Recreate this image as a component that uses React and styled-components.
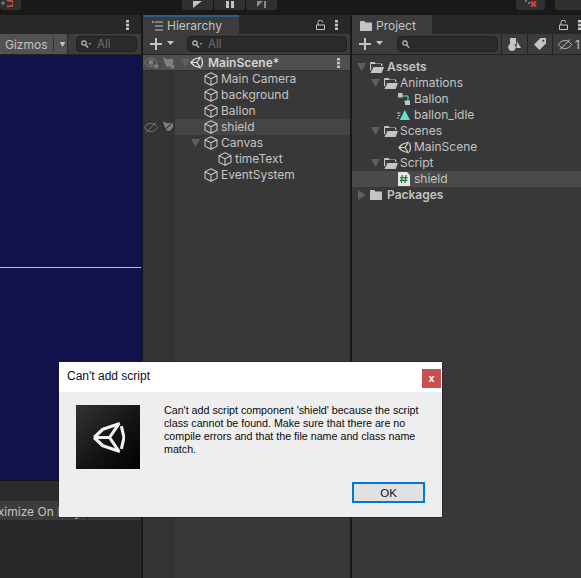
import React from "react";
import styled, { createGlobalStyle } from "styled-components";

const Global = createGlobalStyle`
  html, body { margin: 0; padding: 0; background: #191919; }
  * { box-sizing: border-box; }
`;

const Page = styled.div`
  position: relative;
  width: 581px;
  height: 578px;
  overflow: hidden;
  background: #191919;
  display: flex;
  flex-direction: column;
  font-family: Inter, "Liberation Sans", sans-serif;
  font-size: 12px;
  color: #c4c4c4;
`;

/* top play bar */
const TopBar = styled.div`
  height: 15px;
  flex: none;
  position: relative;
  overflow: hidden;
  display: flex;
  background: #191919;
`;
const TopGroup = styled.div`
  display: flex;
  gap: 1px;
  height: 10px;
  margin-left: ${(p) => p.$ml}px;
  flex: none;
`;
const TopButton = styled.div`
  width: ${(p) => p.$w}px;
  height: 10px;
  flex: none;
  background: #303030;
  border-radius: 0 0 3px 3px;
  display: flex;
  align-items: flex-end;
  justify-content: ${(p) => (p.$end ? "flex-end" : "center")};
  padding: 0 ${(p) => (p.$end ? 8 : 0)}px 2px 0;
  overflow: hidden;
`;

/* panels */
const Panels = styled.div`
  flex: 1;
  display: flex;
  gap: 2px;
  min-height: 0;
  background: #191919;
`;
const Panel = styled.section`
  width: ${(p) => p.$w}px;
  flex: ${(p) => (p.$w ? "none" : "1")};
  display: flex;
  flex-direction: column;
  background: #383838;
  min-width: 0;
  overflow: hidden;
`;
const TabBar = styled.div`
  height: 19px;
  flex: none;
  display: flex;
  align-items: stretch;
  background: #282828;
  position: relative;
`;
const Tab = styled.div`
  width: ${(p) => p.$w}px;
  background: #3c3c3c;
  border-top: 2px solid ${(p) => (p.$focus ? "#2c5d87" : "#3c3c3c")};
  display: flex;
  align-items: center;
  gap: 4px;
  padding-left: ${(p) => p.$pl}px;
  font-size: 12px;
  color: #c4c4c4;
  line-height: 1;
`;
const TabActions = styled.div`
  margin-left: auto;
  display: flex;
  align-items: center;
  gap: ${(p) => p.$gap || 10}px;
  padding-right: ${(p) => p.$pr ?? 6}px;
`;
const Toolbar = styled.div`
  height: 21px;
  flex: none;
  display: flex;
  align-items: center;
  background: #3c3c3c;
  border-bottom: 1px solid #232323;
  padding-left: ${(p) => p.$pl || 0}px;
`;
const Search = styled.div`
  height: 16px;
  width: ${(p) => p.$w}px;
  flex: ${(p) => (p.$w ? "none" : "1")};
  margin-left: ${(p) => p.$ml}px;
  margin-right: ${(p) => p.$mr || 0}px;
  background: #2a2a2a;
  border: 1px solid #202020;
  border-radius: 4px;
  display: flex;
  align-items: center;
  padding-left: 4px;
  gap: 5px;
  color: #6e6e6e;
  font-size: 11.5px;
`;
const ToolSeparated = styled.div`
  height: 20px;
  width: ${(p) => p.$w}px;
  flex: none;
  display: flex;
  align-items: center;
  justify-content: ${(p) => (p.$left ? "flex-start" : "center")};
  padding-left: ${(p) => (p.$left ? 5 : 0)}px;
  gap: 3px;
  border-left: 1px solid #232323;
  overflow: hidden;
  white-space: nowrap;
  color: #c4c4c4;
`;

/* game view */
const GameBody = styled.div`
  flex: 1;
  display: flex;
  flex-direction: column;
  background: #282828;
`;
const Gizmos = styled.div`
  width: 68px;
  height: 20px;
  flex: none;
  background: #525252;
  display: flex;
  align-items: center;
  padding-left: 5px;
  font-size: 12px;
  color: #c4c4c4;
  border-right: 1px solid #2a2a2a;
`;
const GizmoDivider = styled.span`
  width: 1px;
  height: 14px;
  background: #303030;
  margin: 0 5px 0 5px;
`;
const Viewport = styled.div`
  height: 426px;
  flex: none;
  background: #11114c;
  border-bottom: 1px solid #151515;
  display: flex;
  flex-direction: column;
  padding-top: 212px;
`;
const HorizonLine = styled.div`
  height: 1px;
  background: #bcbcd4;
`;
const GameSpacer = styled.div`
  height: 20px;
  flex: none;
  background: #2b2b2b;
`;
const GameStatus = styled.div`
  height: 20px;
  flex: none;
  background: #3c3c3c;
  border-bottom: 1px solid #232323;
  overflow: hidden;
  white-space: nowrap;
  display: flex;
  align-items: center;
  justify-content: flex-start;
`;
const StatusLabel = styled.div`
  width: 88px;
  flex: none;
  display: flex;
  justify-content: flex-end;
  padding: 1px 6px 0 0;
  border-right: 1px solid #262626;
  height: 20px;
  align-items: center;
  color: #c4c4c4;
`;

/* tree */
const Tree = styled.div`
  flex: 1;
  display: flex;
  flex-direction: column;
  background: #383838;
`;
const HierTree = styled(Tree)`
  background: linear-gradient(90deg, #333333 32px, #383838 32px);
`;
const HierRow = styled.div`
  height: 16px;
  display: flex;
  align-items: stretch;
  flex: none;
  background: ${(p) => (p.$scene ? "#4f4f4f" : "transparent")};
  border-bottom: ${(p) => (p.$scene ? "1px solid #303030" : "none")};
  font-weight: ${(p) => (p.$scene ? 600 : 400)};
`;
const HierGutter = styled.div`
  width: 32px;
  flex: none;
  display: flex;
  align-items: center;
  gap: 4px;
  padding-left: 1px;
`;
const HierMain = styled.div`
  flex: 1;
  display: flex;
  align-items: center;
  padding-left: ${(p) => p.$indent}px;
  background: ${(p) => (p.$hover ? "#454545" : "transparent")};
  min-width: 0;
`;
const RowMenu = styled.div`
  margin-left: auto;
  padding-right: 10px;
  display: flex;
  align-items: center;
`;
const ArrowSlot = styled.span`
  width: ${(p) => p.$w}px;
  flex: none;
  display: flex;
  align-items: center;
`;
const Label = styled.span`
  margin-left: ${(p) => p.$ml ?? 3}px;
  line-height: 16px;
  white-space: nowrap;
  color: ${(p) => p.$color || "#c4c4c4"};
`;
const ProjectTree = styled(Tree)`
  padding-top: 4px;
`;
const ProjectRow = styled.div`
  height: 16px;
  flex: none;
  display: flex;
  align-items: center;
  padding-left: ${(p) => p.$indent}px;
  background: ${(p) => (p.$hover ? "#4a4a4a" : "transparent")};
  font-weight: ${(p) => (p.$bold ? 600 : 400)};
`;

/* dialog */
const Dialog = styled.div`
  position: absolute;
  left: 59px;
  top: 362px;
  width: 383px;
  height: 155px;
  background: #eeeeee;
  display: flex;
  flex-direction: column;
  font-family: "Liberation Sans", Arial, sans-serif;
  color: #000;
  box-shadow: 0 0 0 1px rgba(30, 30, 30, 0.5);
`;
const DialogTitle = styled.div`
  height: 30px;
  flex: none;
  background: #fff;
  display: flex;
  align-items: flex-start;
  justify-content: space-between;
  padding: 7px 1px 0 8px;
  font-size: 12px;
  line-height: 15px;
  color: #111;
`;
const CloseBox = styled.div`
  width: 19px;
  height: 19px;
  background: #c75050;
  color: #fff;
  display: flex;
  align-items: center;
  justify-content: center;
  font-weight: 700;
  font-size: 10px;
`;
const DialogBody = styled.div`
  flex: 1;
  display: flex;
  padding: 12px 17px 0 17px;
  gap: 24px;
`;
const LogoBox = styled.div`
  width: 64px;
  height: 64px;
  margin-top: 1px;
  flex: none;
  background: linear-gradient(135deg, #333333 0%, #141414 55%, #000000 100%);
  display: flex;
  align-items: center;
  justify-content: center;
`;
const Message = styled.p`
  margin: 0;
  width: 258px;
  font-size: 10.7px;
  line-height: 13px;
  color: #0a0a0a;
`;
const DialogFooter = styled.div`
  height: 35px;
  flex: none;
  display: flex;
  justify-content: flex-end;
  padding: 0 17px 0 0;
`;
const OkButton = styled.div`
  width: 73px;
  height: 21px;
  background: #e1e1e1;
  border: 2px solid #0078d7;
  display: flex;
  align-items: center;
  justify-content: center;
  font-size: 11.5px;
  color: #111;
`;

/* icons */
const Svg = ({ s = 14, w, h, vb, children, style }) => (
  <svg width={w || s} height={h || s} viewBox={vb || `0 0 ${s} ${s}`} style={{ flex: "none", display: "block", ...style }}>
    {children}
  </svg>
);
const Cube = () => (
  <Svg s={14}>
    <path d="M7 .7 13 3.700v6.600L7 13.300 1 10.300V3.700Z M1 3.700 7 6.700 13 3.700 M7 6.700v6.600" fill="none" stroke="#c4c4c4" strokeWidth="1.100" strokeLinejoin="round" />
  </Svg>
);
const Down = ({ c = "#5f5f5f", w = 9, h = 8 }) => (
  <Svg w={w} h={h} vb="0 0 9 8"><path d="M0 0h9L4.5 8Z" fill={c} /></Svg>
);
const Right = () => (
  <Svg w={8} h={10} vb="0 0 8 10"><path d="M0 0v10l8-5Z" fill="#5f5f5f" /></Svg>
);
const Dots = () => (
  <Svg w={3} h={10} vb="0 0 3 10">
    <path d="M0 0h3v2.400H0ZM0 3.800h3v2.400H0ZM0 7.600h3V10H0Z" fill="#c4c4c4" />
  </Svg>
);
const Lock = () => (
  <Svg w={9} h={10} vb="0 0 9 10">
    <path d="M.5 5h8v4.500h-8Z M2 5V2.500a2.300 2.300 0 0 1 4.600 0" fill="none" stroke="#c4c4c4" strokeWidth="1" />
  </Svg>
);
const Plus = () => (
  <Svg w={24} h={12} vb="0 0 24 12">
    <path d="M5 0h2v5h5v2H7v5H5V7H0V5h5Z" fill="#c4c4c4" />
    <path d="M17 3h7l-3.500 4Z" fill="#c4c4c4" />
  </Svg>
);
const SearchGlass = ({ caret }) => (
  <Svg w={11} h={9} vb="0 0 11 9">
    <circle cx="3" cy="3" r="2.200" fill="none" stroke="#bdbdbd" strokeWidth="1.200" />
    <path d="M4.600 4.800 7 7.600" stroke="#bdbdbd" strokeWidth="1.400" />
    {caret && <path d="M7.500 3h3L9 5Z" fill="#9a9a9a" />}
  </Svg>
);
const ListIcon = () => (
  <Svg w={11} h={10} vb="0 0 11 10">
    <path d="M3 1h8M3 5h8M3 9h8" stroke="#c4c4c4" strokeWidth="1" />
    <path d="M0 1h2M1 0v2" stroke="#c4c4c4" strokeWidth=".8" />
  </Svg>
);
const UnityMark = ({ s = 14, c = "#d0d0d0", sw = 3 }) => (
  <Svg vb="0 0 32 32" w={s} h={s}>
    <path d="M2 16 10.500 8 L27 2.500 M28.500 5 31 16 28.500 27 M27 29.500 10.500 24 2 16" fill="none" stroke={c} strokeWidth={sw} strokeLinejoin="round" />
    <path d="M2 16H17L25.500 3.500M17 16 25.500 28.500" fill="none" stroke={c} strokeWidth={sw} />
  </Svg>
);
const FolderOpen = () => (
  <Svg w={14} h={11} vb="0 0 14 11">
    <path d="M0 1.200C0 .5.5 0 1.200 0h3.300l1.300 1.500h5.500c.7 0 1 .4 1 1V4H3L0 9Z" fill="#c4c4c4" />
    <path d="M3.600 5H14l-2.400 6H.4Z" fill="#c4c4c4" />
    <path d="M1 2h10v2H3L1 7Z" fill="#383838" />
  </Svg>
);
const FolderClosed = () => (
  <Svg w={12} h={10} vb="0 0 12 10">
    <path d="M0 1C0 .4.4 0 1 0h3.200l1.300 1.500H11c.6 0 1 .4 1 1V9c0 .6-.4 1-1 1H1c-.6 0-1-.4-1-1Z" fill="#c4c4c4" />
  </Svg>
);
const AnimatorIcon = () => (
  <Svg s={12}>
    <path d="M4 3h6v6H6" fill="none" stroke="#5ce3d0" strokeWidth="1" />
    <path d="M0 0h4.500v4.500H0Z" fill="#c4c4c4" />
    <path d="M7 7.500h5V12H7Z" fill="#c4c4c4" />
  </Svg>
);
const ClipIcon = () => (
  <Svg w={13} h={10} vb="0 0 13 10">
    <path d="M7.800 0 13 10H2.800Z" fill="#5ce3d0" />
    <path d="M0 3h3.500M1 5.500h2.200M0 8h2" stroke="#c4c4c4" strokeWidth="1" />
  </Svg>
);
const CsIcon = () => (
  <Svg w={12} h={14} vb="0 0 12 14">
    <path d="M0 0h9l3 3v11H0Z" fill="#e6e6e6" />
    <path d="M4.300 3 3.300 11M8 3 7 11M2.200 5.600h7.400M2 8.400h7.400" stroke="#0c7a3a" strokeWidth="1.200" fill="none" />
  </Svg>
);
const Eye = ({ off, c = "#7f7f7f" }) => (
  <Svg w={14} h={11} vb="0 0 14 11">
    <path d="M.5 5.500C3 2 5 1.500 7 1.500s4 .5 6.500 4C11 9 9 9.500 7 9.500S3 9 .5 5.500Z" fill="none" stroke={c} strokeWidth="1" />
    {off ? <path d="M2 10.500 12 .5" stroke={c} strokeWidth="1" /> : <circle cx="7" cy="5.500" r="2.400" fill={c} />}
    {!off && <path d="M10.500 7.500h3.500V11h-3.500Z" fill={c} />}
  </Svg>
);
const PickHand = ({ off, c = "#7f7f7f" }) => (
  <Svg w={12} h={12} vb="0 0 13 12">
    <path d="M1 0 6 2 12 1v5L9 10H5L3 6Z" fill={c} />
    {off ? <path d="M1 11 12 .5" stroke="#333" strokeWidth="1.200" /> : <path d="M9.500 8h3.500v4H9.500Z" fill={c} />}
  </Svg>
);
const FilterShapes = () => (
  <Svg s={13}>
    <path d="M2 0h6v6H2Z" fill="#c4c4c4" />
    <circle cx="4" cy="9.300" r="3.700" fill="#c4c4c4" />
    <path d="M9 3.500 13 10H8.500Z" fill="#c4c4c4" />
  </Svg>
);
const TagIcon = () => (
  <Svg s={12}>
    <path d="M6.500 0H12v5.500L5.500 12 0 6.500Z" fill="#c4c4c4" />
    <circle cx="9.300" cy="2.700" r="1" fill="#3c3c3c" />
  </Svg>
);
const PlayIcon = () => <Svg w={9} h={7} vb="0 0 9 7"><path d="M0 0h9L0 7Z" fill="#c4c4c4" /></Svg>;
const PauseIcon = () => <Svg w={8} h={7} vb="0 0 8 7"><path d="M0 0h3v7H0ZM5 0h3v7H5Z" fill="#c4c4c4" /></Svg>;
const StepIcon = () => <Svg w={9} h={7} vb="0 0 9 7"><path d="M0 0h6L0 6ZM7 0h2v7H7Z" fill="#8a8a8a" /></Svg>;
const MagnetIcon = () => (
  <Svg w={12} h={8} vb="0 0 12 8">
    <path d="M0 3h4M2 1v4" stroke="#8a8a8a" strokeWidth="1" />
    <path d="M6 .7h3.500a2.800 2.800 0 0 1 0 5.600H6" fill="none" stroke="#c9562f" strokeWidth="1.600" />
  </Svg>
);

const sceneEntries = [
  { name: "Main Camera", indent: 29 },
  { name: "background", indent: 29 },
  { name: "Ballon", indent: 29 },
  { name: "shield", indent: 29, hover: true, hidden: true },
  { name: "Canvas", indent: 16, open: true },
  { name: "timeText", indent: 43 },
  { name: "EventSystem", indent: 29 },
];

export default function App() {
  return (
    <Page>
      <Global />
      <TopBar>
        <TopGroup $ml={0}>
          <TopButton $w={21} $end><MagnetIcon /></TopButton>
        </TopGroup>
        <TopGroup $ml={161}>
          <TopButton $w={31}><PlayIcon /></TopButton>
          <TopButton $w={31}><PauseIcon /></TopButton>
          <TopButton $w={31}><StepIcon /></TopButton>
        </TopGroup>
        <TopGroup $ml={239}>
          <TopButton $w={29}>
            <Svg w={14} h={8} vb="0 0 14 8"><path d="M1 1h2M4 3h2" stroke="#bbb" /><path d="M7 1.500l5 5M12 1.500l-5 5" stroke="#e23b3b" strokeWidth="2.200" /></Svg>
          </TopButton>
        </TopGroup>
        <TopGroup $ml={10}>
          <TopButton $w={30} />
        </TopGroup>
      </TopBar>
      <Panels>
        <Panel $w={141}>
          <TabBar>
            <TabActions $pr={12}><Dots /></TabActions>
          </TabBar>
          <Toolbar>
            <Gizmos>
              Gizmos
              <GizmoDivider />
              <Down c="#c4c4c4" w={7} h={5} />
            </Gizmos>
            <Search $w={61} $ml={8}>
              <SearchGlass caret />
              <span>All</span>
            </Search>
          </Toolbar>
          <GameBody>
            <Viewport><HorizonLine /></Viewport>
            <GameSpacer />
            <GameStatus>
              <StatusLabel>ximize On Play</StatusLabel>
            </GameStatus>
          </GameBody>
        </Panel>
        <Panel $w={207}>
          <TabBar>
            <Tab $w={96} $pl={9} $focus>
              <ListIcon />
              Hierarchy
            </Tab>
            <TabActions $pr={12}><Lock /><Dots /></TabActions>
          </TabBar>
          <Toolbar $pl={7}>
            <Plus />
            <Search $ml={13} $mr={3}>
              <SearchGlass caret />
              <span>All</span>
            </Search>
          </Toolbar>
          <HierTree>
            <HierRow $scene>
              <HierGutter>
                <Eye />
                <PickHand />
              </HierGutter>
              <HierMain $indent={6}>
                <Down />
                <UnityMark s={13} c="#e4e4e4" />
                <Label $ml={5} $color="#d4d4d4">MainScene*</Label>
                <RowMenu><Dots /></RowMenu>
              </HierMain>
            </HierRow>
            {sceneEntries.map((e) => (
              <HierRow key={e.name}>
                <HierGutter>
                  {e.hidden && (
                    <>
                      <Eye off />
                      <PickHand off />
                    </>
                  )}
                </HierGutter>
                <HierMain $indent={e.indent} $hover={e.hover}>
                  {e.open && <ArrowSlot $w={13}><Down /></ArrowSlot>}
                  <Cube />
                  <Label>{e.name}</Label>
                </HierMain>
              </HierRow>
            ))}
          </HierTree>
        </Panel>
        <Panel>
          <TabBar>
            <Tab $w={80} $pl={8}>
              <FolderClosed />
              Project
            </Tab>
            <TabActions $pr={0}><Lock /><Dots /></TabActions>
          </TabBar>
          <Toolbar $pl={7}>
            <Plus />
            <Search $w={101} $ml={14} $mr={3}>
              <SearchGlass />
            </Search>
            <ToolSeparated $w={26}><FilterShapes /></ToolSeparated>
            <ToolSeparated $w={25}><TagIcon /></ToolSeparated>
            <ToolSeparated $w={29} $left>
              <Eye off c="#c4c4c4" />
              <span>1</span>
            </ToolSeparated>
          </Toolbar>
          <ProjectTree>
            <ProjectRow $indent={5} $bold>
              <ArrowSlot $w={13}><Down /></ArrowSlot>
              <FolderOpen />
              <Label>Assets</Label>
            </ProjectRow>
            <ProjectRow $indent={19}>
              <ArrowSlot $w={13}><Down /></ArrowSlot>
              <FolderOpen />
              <Label $ml={2}>Animations</Label>
            </ProjectRow>
            <ProjectRow $indent={46}>
              <AnimatorIcon />
              <Label $ml={4}>Ballon</Label>
            </ProjectRow>
            <ProjectRow $indent={45}>
              <ClipIcon />
              <Label $ml={4}>ballon_idle</Label>
            </ProjectRow>
            <ProjectRow $indent={19}>
              <ArrowSlot $w={13}><Down /></ArrowSlot>
              <FolderOpen />
              <Label $ml={2}>Scenes</Label>
            </ProjectRow>
            <ProjectRow $indent={46}>
              <UnityMark s={13} />
              <Label $ml={3}>MainScene</Label>
            </ProjectRow>
            <ProjectRow $indent={19}>
              <ArrowSlot $w={13}><Down /></ArrowSlot>
              <FolderOpen />
              <Label $ml={2}>Script</Label>
            </ProjectRow>
            <ProjectRow $indent={46} $hover>
              <CsIcon />
              <Label $ml={4}>shield</Label>
            </ProjectRow>
            <ProjectRow $indent={6} $bold>
              <ArrowSlot $w={12}><Right /></ArrowSlot>
              <FolderClosed />
              <Label $ml={5}>Packages</Label>
            </ProjectRow>
          </ProjectTree>
        </Panel>
      </Panels>
      <Dialog>
        <DialogTitle>
          <span>Can't add script</span>
          <CloseBox>x</CloseBox>
        </DialogTitle>
        <DialogBody>
          <LogoBox><UnityMark s={33} c="#f2f2f2" sw={3} /></LogoBox>
          <Message>
            Can't add script component 'shield' because the script class cannot be found. Make sure that there are no compile errors and that the file name and class name match.
          </Message>
        </DialogBody>
        <DialogFooter>
          <OkButton>OK</OkButton>
        </DialogFooter>
      </Dialog>
    </Page>
  );
}
